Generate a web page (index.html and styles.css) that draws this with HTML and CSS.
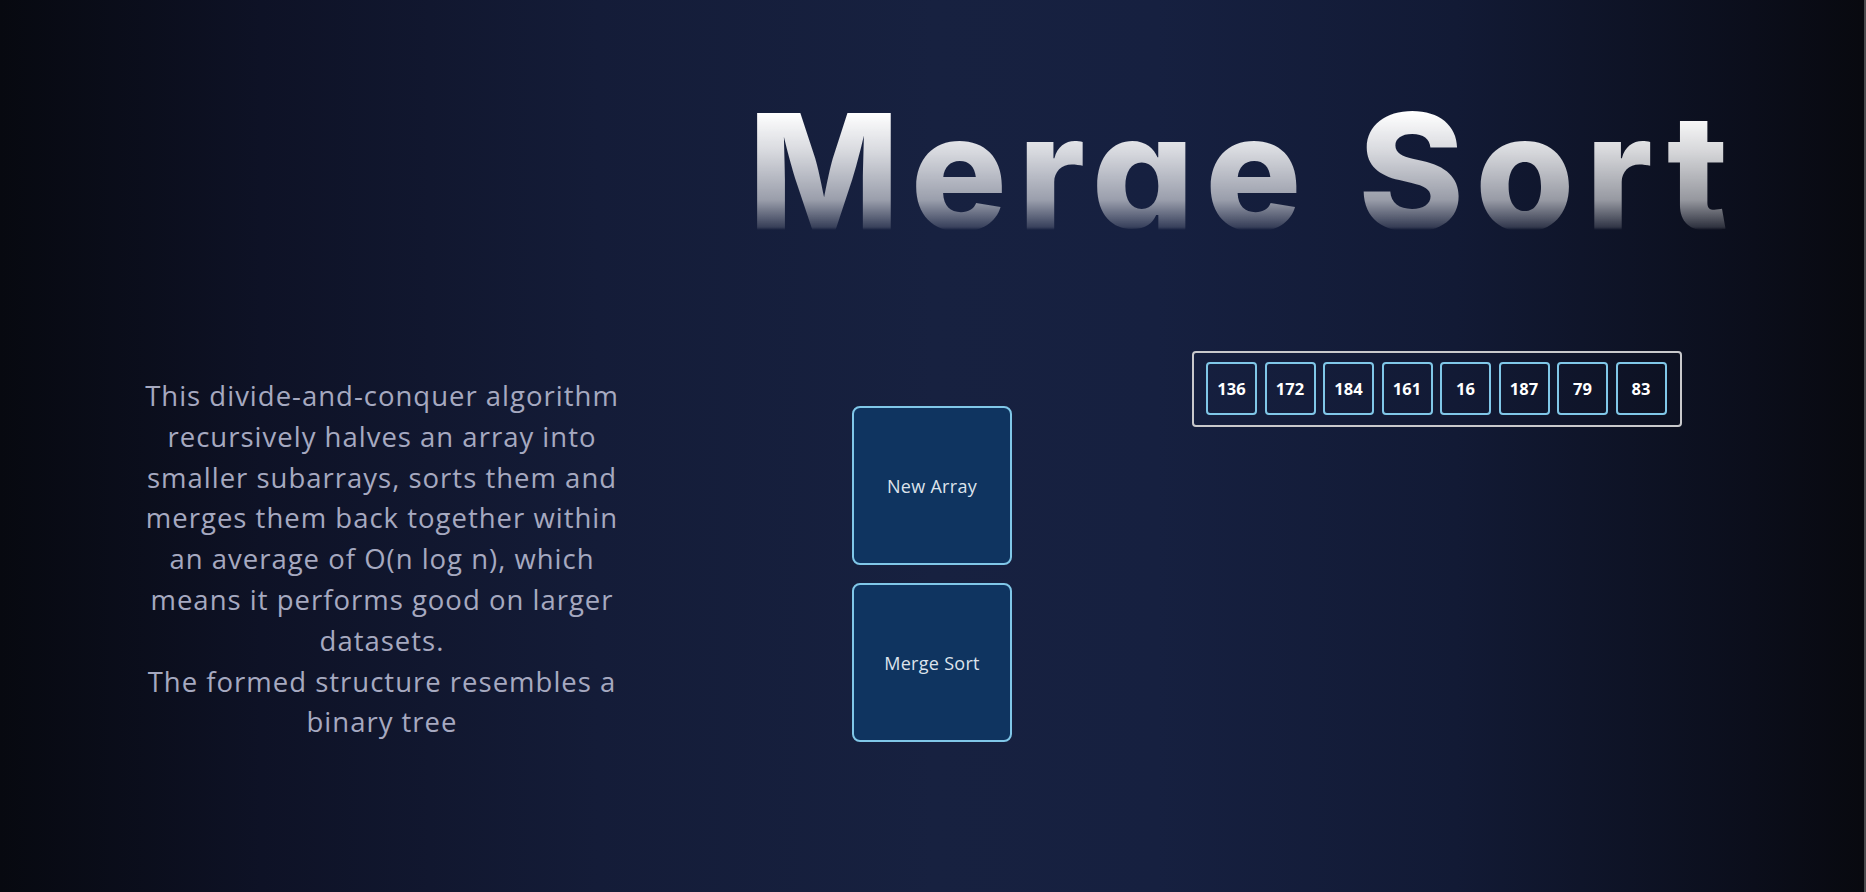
FILE: index.html
```html
<!DOCTYPE html>
<html lang="en">
<head>
<meta charset="utf-8">
<title>Merge Sort</title>
<link rel="stylesheet" href="styles.css">
</head>
<body>
<div class="app">
  <header class="title-row">
    <h1 class="title">Merge Sort</h1>
  </header>
  <main class="main">
    <section class="info">
      <p class="description">This divide-and-conquer algorithm<br>recursively halves an array into<br>smaller subarrays, sorts them and<br>merges them back together within<br>an average of O(n log n), which<br>means it performs good on larger<br>datasets.<br>The formed structure resembles a<br>binary tree</p>
    </section>
    <section class="controls">
      <button class="btn">New Array</button>
      <button class="btn">Merge Sort</button>
    </section>
    <section class="visual">
      <div class="array">
        <div class="cell">136</div>
        <div class="cell">172</div>
        <div class="cell">184</div>
        <div class="cell">161</div>
        <div class="cell">16</div>
        <div class="cell">187</div>
        <div class="cell">79</div>
        <div class="cell">83</div>
      </div>
    </section>
  </main>
</div>
</body>
</html>
```
FILE: styles.css
```css
html, body {
  margin: 0;
  padding: 0;
  height: 100%;
}

body {
  font-family: "Open Sans", "Noto Sans", sans-serif;
  background: linear-gradient(90deg, #070910 0%, #0e1226 14%, #141c38 32%, #172140 50%, #162040 62%, #121a35 78%, #0b0e1b 94%, #08090f 100%);
  overflow: hidden;
  box-shadow: inset -2px 0 0 #4b4b4e;
}

.app {
  height: 892px;
  display: flex;
  flex-direction: column;
}

.title-row {
  display: flex;
  padding-top: 91px;
  padding-left: 748px;
}

.title {
  margin: 0;
  height: 139px;
  overflow: hidden;
  font-family: "Inter", "Open Sans", sans-serif;
  font-weight: 800;
  font-size: 161px;
  line-height: 161px;
  letter-spacing: 10.6px;
  white-space: nowrap;
  color: transparent;
  background: linear-gradient(180deg, #ffffff 0px, #ffffff 22px, rgba(255,255,255,0.84) 59px, rgba(255,255,255,0.57) 109px, rgba(255,255,255,0.15) 136px, rgba(255,255,255,0) 139px);
  -webkit-background-clip: text;
  background-clip: text;
}

.main {
  display: flex;
  align-items: flex-start;
  padding-top: 121px;
  padding-left: 132px;
}

.info {
  width: 500px;
  margin-top: 25px;
  margin-right: 220px;
}

.description {
  margin: 0;
  text-align: center;
  font-size: 27.5px;
  line-height: 40.8px;
  letter-spacing: 1px;
  color: #a6a9c0;
  white-space: nowrap;
}

.controls {
  display: flex;
  flex-direction: column;
  gap: 18px;
  margin-top: 55px;
  margin-right: 180px;
}

.btn {
  width: 160px;
  height: 159px;
  box-sizing: border-box;
  background: #0f3460;
  border: 2px solid #80c7e8;
  border-radius: 8px;
  color: #dde3ec;
  font-family: "Open Sans", "Noto Sans", sans-serif;
  font-size: 18px;
  letter-spacing: 0.3px;
  padding: 0;
  cursor: pointer;
}

.array {
  display: inline-flex;
  gap: 7.5px;
  padding: 9px 13px 10px 12px;
  border: 2px solid #c9c9cc;
  border-radius: 4px;
}

.cell {
  width: 51px;
  height: 53px;
  box-sizing: border-box;
  border: 2px solid #80c7e8;
  border-radius: 4px;
  display: flex;
  align-items: center;
  justify-content: center;
  color: #ffffff;
  font-size: 16.5px;
  font-weight: 700;
}
```
